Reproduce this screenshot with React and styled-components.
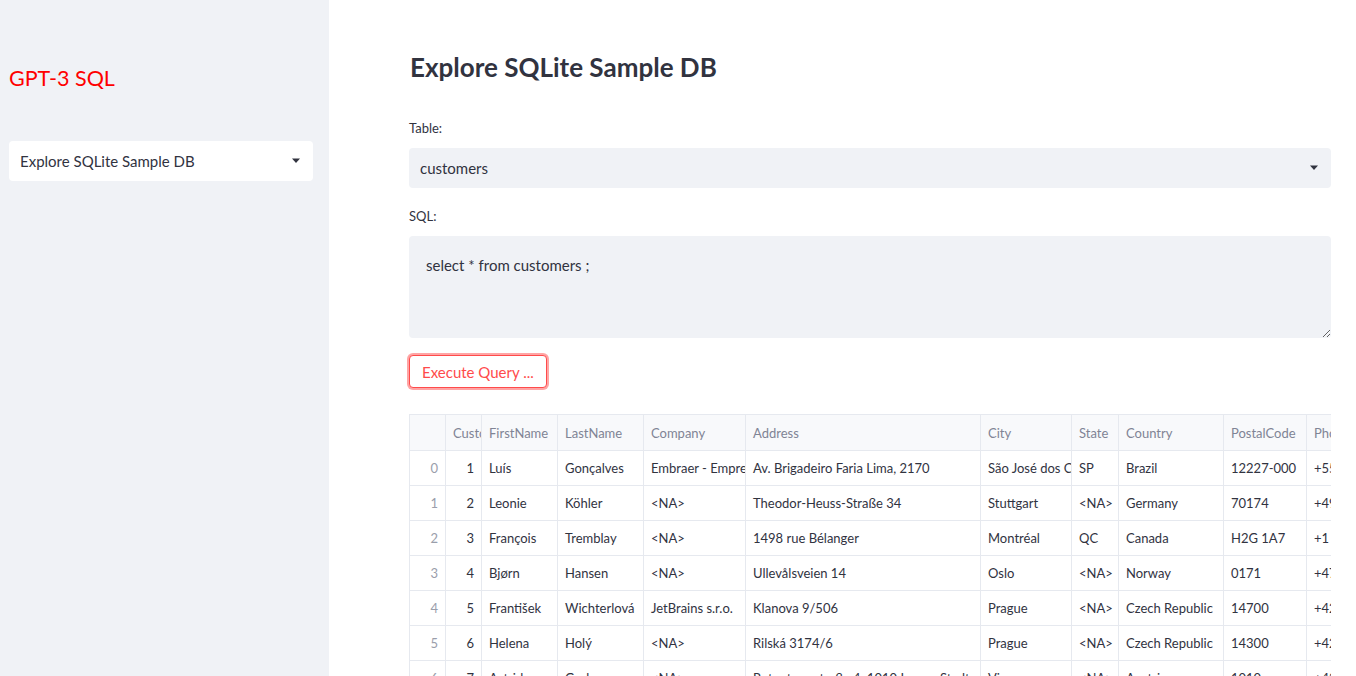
import React from 'react'
import styled, { createGlobalStyle } from 'styled-components'

const GlobalStyle = createGlobalStyle`
	html, body {
		margin: 0;
		padding: 0;
		background: #ffffff;
		font-family: Lato, "Liberation Sans", sans-serif;
		color: #31333f;
		overflow: hidden;
	}
`

const columns = [
	{ key: 'idx', label: '', width: 36, align: 'right', muted: true },
	{ key: 'CustomerId', label: 'CustomerId', width: 36, align: 'right' },
	{ key: 'FirstName', label: 'FirstName', width: 76 },
	{ key: 'LastName', label: 'LastName', width: 86 },
	{ key: 'Company', label: 'Company', width: 102 },
	{ key: 'Address', label: 'Address', width: 235 },
	{ key: 'City', label: 'City', width: 91 },
	{ key: 'State', label: 'State', width: 47 },
	{ key: 'Country', label: 'Country', width: 105 },
	{ key: 'PostalCode', label: 'PostalCode', width: 83 },
	{ key: 'Phone', label: 'Phone', width: 140 },
]

const rows = [
	['0', '1', 'Luís', 'Gonçalves', 'Embraer - Empresa Brasileira de Aeronáutica S.A.', 'Av. Brigadeiro Faria Lima, 2170', 'São José dos Campos', 'SP', 'Brazil', '12227-000', '+55 (12) 3923-5555'],
	['1', '2', 'Leonie', 'Köhler', '<NA>', 'Theodor-Heuss-Straße 34', 'Stuttgart', '<NA>', 'Germany', '70174', '+49 0711 2842222'],
	['2', '3', 'François', 'Tremblay', '<NA>', '1498 rue Bélanger', 'Montréal', 'QC', 'Canada', 'H2G 1A7', '+1 (514) 721-4711'],
	['3', '4', 'Bjørn', 'Hansen', '<NA>', 'Ullevålsveien 14', 'Oslo', '<NA>', 'Norway', '0171', '+47 22 44 22 22'],
	['4', '5', 'František', 'Wichterlová', 'JetBrains s.r.o.', 'Klanova 9/506', 'Prague', '<NA>', 'Czech Republic', '14700', '+420 2 4172 5555'],
	['5', '6', 'Helena', 'Holý', '<NA>', 'Rilská 3174/6', 'Prague', '<NA>', 'Czech Republic', '14300', '+420 2 4177 0449'],
	['6', '7', 'Astrid', 'Gruber', '<NA>', 'Rotenturmstraße 4, 1010 Innere Stadt', 'Vienne', '<NA>', 'Austria', '1010', '+43 01 5134505'],
	['7', '8', 'Daan', 'Peeters', '<NA>', 'Grétrystraat 63', 'Brussels', '<NA>', 'Belgium', '1000', '+32 02 219 03 03'],
]

const tableWidth = columns.reduce((s, c) => s + c.width, 0)

const Caret = () => (
	<svg width="10" height="6" viewBox="0 0 10 6">
		<path d="M1 0.5 H9 L5 5 Z" fill="#31333f" />
	</svg>
)

const App = () => {
	return (
		<Page>
			<GlobalStyle />
			<Sidebar>
				<AppTitle>GPT-3 SQL</AppTitle>
				<Select variant="white">
					<span>Explore SQLite Sample DB</span>
					<Caret />
				</Select>
			</Sidebar>
			<Main>
				<Heading>Explore SQLite Sample DB</Heading>
				<Label>Table:</Label>
				<Select>
					<span>customers</span>
					<Caret />
				</Select>
				<Label>SQL:</Label>
				<TextArea defaultValue="select * from customers ;" spellCheck={false} />
				<Button>Execute Query ...</Button>
				<TableWrap>
					<Table style={{ width: tableWidth }}>
						<colgroup>
							{columns.map(c => <col key={c.key} style={{ width: c.width }} />)}
						</colgroup>
						<thead>
							<tr>
								{columns.map(c => <Th key={c.key}>{c.label}</Th>)}
							</tr>
						</thead>
						<tbody>
							{rows.map(r => (
								<tr key={r[0]}>
									{r.map((v, i) => (
										<Td key={i} align={columns[i].align} muted={columns[i].muted ? 1 : 0}>{v}</Td>
									))}
								</tr>
							))}
						</tbody>
					</Table>
				</TableWrap>
			</Main>
		</Page>
	)
}

export default App

const Page = styled.div`
	display: flex;
	width: 1356px;
	height: 676px;
	overflow: hidden;
`

const Sidebar = styled.aside`
	width: 329px;
	flex-shrink: 0;
	background: #f0f2f6;
	padding: 63px 16px 0 9px;
	box-sizing: border-box;
	display: flex;
	flex-direction: column;
`

const AppTitle = styled.div`
	color: #ff0000;
	font-size: 21.5px;
	line-height: 30px;
	margin-bottom: 48px;
`

const Select = styled.div`
	flex-shrink: 0;
	height: 40px;
	box-sizing: border-box;
	border-radius: 4px;
	background: ${ p => p.variant === 'white' ? '#ffffff' : '#f0f2f6' };
	display: flex;
	align-items: center;
	justify-content: space-between;
	padding: 0 12px 0 11px;
	font-size: 15px;
	color: #31333f;
`

const Main = styled.main`
	flex: 1;
	padding: 50px 25px 0 80px;
	display: flex;
	flex-direction: column;
	min-width: 0;
	& > * {
		flex-shrink: 0;
	}
`

const Heading = styled.h2`
	margin: 0 0 36px 1px;
	font-size: 26px;
	font-weight: 700;
	line-height: 34px;
	color: #31333f;
`

const Label = styled.label`
	font-size: 13px;
	line-height: 16px;
	margin-bottom: 12px;
	color: #31333f;
	&:not(:first-of-type) {
		margin-top: 20px;
	}
`

const TextArea = styled.textarea`
	height: 102px;
	box-sizing: border-box;
	border: none;
	border-radius: 4px;
	background: #f0f2f6;
	padding: 20px 17px;
	font-family: Lato, "Liberation Sans", sans-serif;
	font-size: 15px;
	line-height: 18px;
	color: #31333f;
	resize: vertical;
	outline: none;
`

const Button = styled.button`
	align-self: flex-start;
	margin-top: 17px;
	height: 33px;
	padding: 0 12px;
	background: #ffffff;
	border: 1px solid #ff4b4b;
	border-radius: 4px;
	box-shadow: 0 0 0 2px rgba(255, 75, 75, 0.5);
	color: #ff4b4b;
	font-family: Lato, "Liberation Sans", sans-serif;
	font-size: 15px;
`

const TableWrap = styled.div`
	margin-top: 26px;
	width: 922px;
	overflow: hidden;
`

const Table = styled.table`
	border-collapse: collapse;
	table-layout: fixed;
	font-size: 13px;
	border-left: 1px solid #e6e9ef;
	border-top: 1px solid #e6e9ef;
`

const Th = styled.th`
	height: 35px;
	padding: 0 7px;
	background: #f8f9fb;
	color: #808495;
	font-weight: 400;
	text-align: left;
	white-space: nowrap;
	overflow: hidden;
	border-right: 1px solid #e6e9ef;
	border-bottom: 1px solid #e6e9ef;
	&:nth-child(2) {
		padding: 0 0 0 7px;
	}
`

const Td = styled.td`
	height: 34px;
	padding: 0 7px 0 7px;
	text-align: ${ p => p.align || 'left' };
	color: ${ p => p.muted ? '#9a9eab' : '#31333f' };
	white-space: nowrap;
	overflow: hidden;
	border-right: 1px solid #e6e9ef;
	border-bottom: 1px solid #e6e9ef;
`
